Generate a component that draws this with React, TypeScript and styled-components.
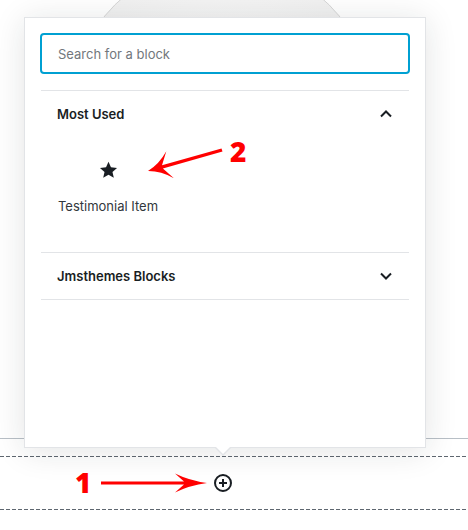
import styled, { createGlobalStyle } from "styled-components";

const GlobalStyle = createGlobalStyle`
  html, body {
    margin: 0;
    padding: 0;
    background: #fff;
  }
  body {
    font-family: Inter, "Noto Sans", "Liberation Sans", sans-serif;
    color: #191e23;
  }
`;

const Page = styled.div`
  position: relative;
  width: 468px;
  height: 530px;
  overflow: hidden;
  display: flex;
  flex-direction: column;
`;

const BlockArea = styled.div`
  position: relative;
  height: 438px;
  border-bottom: 1px solid #b8bfc6;
  flex-shrink: 0;
`;

const Avatar = styled.div`
  position: absolute;
  left: 70px;
  top: -40px;
  width: 304px;
  height: 304px;
  border-radius: 50%;
  background: radial-gradient(circle at 50% 40%, #f7f7f7 0%, #efefef 70%);
  border: 1px solid #d6d6d6;
  box-sizing: border-box;
`;

const DashedLine = styled.div`
  height: 1px;
  background: repeating-linear-gradient(
    to right,
    #5f6770 0 4px,
    transparent 4px 6px
  );
`;

const InserterRow = styled.div`
  margin-top: 17px;
  display: flex;
  flex-direction: column;
`;

const InserterBody = styled.div`
  height: 52px;
  display: flex;
  align-items: center;
  padding-left: 213px;
`;

const InserterButton = styled.button`
  border: 0;
  background: none;
  padding: 0;
  width: 20px;
  height: 20px;
  display: flex;
  align-items: center;
  justify-content: center;
  cursor: pointer;
`;

const Popover = styled.div`
  position: absolute;
  left: 24px;
  top: 17px;
  width: 402px;
  height: 431px;
  box-sizing: border-box;
  background: #fff;
  border: 1px solid #e2e4e7;
  box-shadow: 0 3px 30px rgba(25, 30, 35, 0.12);
  display: flex;
  flex-direction: column;

  &::before,
  &::after {
    content: "";
    position: absolute;
    left: 190px;
    border-style: solid;
    border-color: transparent;
  }
  &::before {
    bottom: -9px;
    border-width: 8px 8px 0;
    border-top-color: #e2e4e7;
  }
  &::after {
    bottom: -7px;
    border-width: 8px 8px 0;
    border-top-color: #fff;
  }
`;

const SearchWrap = styled.div`
  padding: 15px 15px 16px;
`;

const SearchInput = styled.input`
  display: block;
  width: 100%;
  height: 41px;
  box-sizing: border-box;
  border: 2px solid #00a0d2;
  border-radius: 4px;
  padding: 0 16px;
  font-family: inherit;
  font-size: 13px;
  color: #191e23;
  outline: none;

  &::placeholder {
    color: #72777c;
  }
`;

const Results = styled.div`
  margin: 0 16px;
`;

const Section = styled.div`
  border-top: 1px solid #e2e4e7;

  &:last-child {
    border-bottom: 1px solid #e2e4e7;
  }
`;

const SectionToggle = styled.button`
  width: 100%;
  height: 46px;
  border: 0;
  background: none;
  padding: 0 16px;
  display: flex;
  align-items: center;
  justify-content: space-between;
  font-family: inherit;
  font-size: 13px;
  font-weight: 600;
  color: #191e23;
  cursor: pointer;
`;

const SectionBody = styled.div`
  padding: 23px 0 38px;
  display: flex;
`;

const BlockItem = styled.button`
  width: 134px;
  border: 0;
  background: none;
  padding: 0;
  display: flex;
  flex-direction: column;
  align-items: center;
  gap: 18px;
  font-family: inherit;
  color: #191e23;
  cursor: pointer;
`;

const ItemIcon = styled.span`
  height: 20px;
  display: flex;
  align-items: center;
`;

const ItemLabel = styled.span`
  font-size: 13px;
  line-height: 16px;
  color: #32373c;
`;

const Overlay = styled.svg`
  position: absolute;
  left: 0;
  top: 0;
  pointer-events: none;
`;

const Marker = styled.span<{ $x: number; $y: number }>`
  position: absolute;
  left: ${(p) => p.$x}px;
  top: ${(p) => p.$y}px;
  font-family: "Open Sans", "Liberation Sans", sans-serif;
  font-weight: 800;
  font-size: 28px;
  line-height: 1;
  color: #ff0000;
`;

const Chevron = ({ up }: { up?: boolean }) => (
  <svg width="14" height="14" viewBox="0 0 14 14">
    <path
      d={up ? "M2 9.5 L7 4.5 L12 9.5" : "M2 4.5 L7 9.5 L12 4.5"}
      fill="none"
      stroke="#191e23"
      strokeWidth="2"
    />
  </svg>
);

const Star = () => (
  <svg width="19" height="18" viewBox="0 0 20 19">
    <path
      d="M10 0.8 L12.6 6.6 L19 7.3 L14.2 11.5 L15.6 17.8 L10 14.6 L4.4 17.8 L5.8 11.5 L1 7.3 L7.4 6.6 Z"
      fill="#191e23"
    />
  </svg>
);

const PlusCircle = () => (
  <svg width="20" height="20" viewBox="0 0 20 20">
    <circle cx="10" cy="10" r="8" fill="none" stroke="#191e23" strokeWidth="2" />
    <path d="M10 6 V14 M6 10 H14" stroke="#191e23" strokeWidth="2" />
  </svg>
);

// red hand-drawn style arrow, tip first
function arrowPath(
  tail: [number, number],
  tip: [number, number],
  headLen: number,
  halfW: number,
  notch: number,
  thick: number
) {
  const dx = tail[0] - tip[0];
  const dy = tail[1] - tip[1];
  const len = Math.hypot(dx, dy);
  const ux = dx / len;
  const uy = dy / len;
  const px = -uy;
  const py = ux;
  const at = (a: number, b: number) =>
    `${(tip[0] + ux * a + px * b).toFixed(1)} ${(tip[1] + uy * a + py * b).toFixed(1)}`;
  return [
    `M${at(0, 0)}`,
    `Q${at(headLen * 0.55, halfW * 0.25)} ${at(headLen, halfW)}`,
    `L${at(notch, thick / 2)}`,
    `L${at(len, thick / 2)}`,
    `L${at(len, -thick / 2)}`,
    `L${at(notch, -thick / 2)}`,
    `L${at(headLen, -halfW)}`,
    `Q${at(headLen * 0.55, -halfW * 0.25)} ${at(0, 0)}`,
    "Z",
  ].join(" ");
}

export default function App() {
  return (
    <>
      <GlobalStyle />
      <Page>
        <BlockArea>
          <Avatar />
        </BlockArea>
        <InserterRow>
          <DashedLine />
          <InserterBody>
            <InserterButton aria-label="Add block">
              <PlusCircle />
            </InserterButton>
          </InserterBody>
          <DashedLine />
        </InserterRow>

        <Popover>
          <SearchWrap>
            <SearchInput placeholder="Search for a block" />
          </SearchWrap>
          <Results>
            <Section>
              <SectionToggle>
                Most Used
                <Chevron up />
              </SectionToggle>
              <SectionBody>
                <BlockItem>
                  <ItemIcon>
                    <Star />
                  </ItemIcon>
                  <ItemLabel>Testimonial Item</ItemLabel>
                </BlockItem>
              </SectionBody>
            </Section>
            <Section>
              <SectionToggle>
                Jmsthemes Blocks
                <Chevron />
              </SectionToggle>
            </Section>
          </Results>
        </Popover>

        <Overlay width="468" height="530">
          <path d={arrowPath([222, 150], [148, 171], 23, 14, 15, 3.4)} fill="#ff0000" />
          <path d={arrowPath([101, 483], [207, 483], 32, 9.5, 23, 3)} fill="#ff0000" />
        </Overlay>
        <Marker $x={230} $y={137}>2</Marker>
        <Marker $x={75} $y={468}>1</Marker>
      </Page>
    </>
  );
}
